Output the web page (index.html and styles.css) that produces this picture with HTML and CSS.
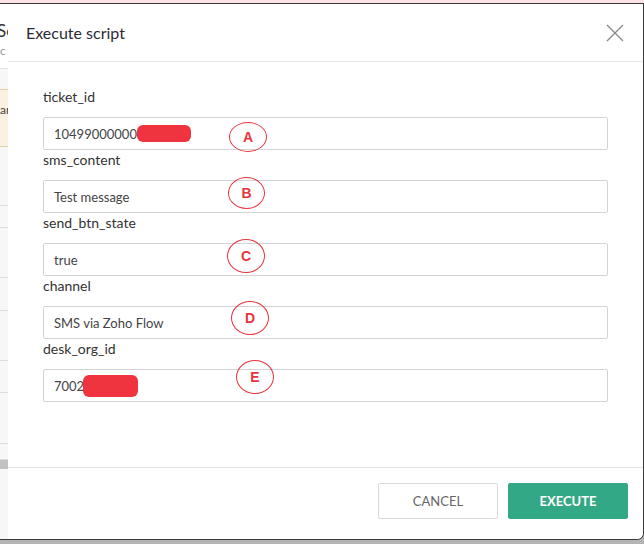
FILE: index.html
```html
<!DOCTYPE html>
<html>
<head>
<meta charset="utf-8">
<link rel="stylesheet" href="styles.css">
</head>
<body>
<div class="topbar"></div>
<div class="screen">
  <div class="app">
    <div class="app-head">
      <div class="app-title">Se</div>
      <div class="app-sub">c</div>
    </div>
    <div class="app-notice">ar</div>
    <div class="app-rows">
      <div class="row r1"></div>
      <div class="row r2"></div>
      <div class="row r3"></div>
      <div class="row r4"></div>
      <div class="row r5"></div>
      <div class="row r6"></div>
      <div class="row r7"></div>
      <div class="row r8"></div>
      <div class="row r9"></div>
    </div>
  </div>

  <div class="modal">
    <div class="modal-head">
      <div class="modal-title">Execute script</div>
      <svg class="close" width="18" height="18" viewBox="0 0 18 18">
        <path d="M1 1 L17 17 M17 1 L1 17" stroke="#8a8a8a" stroke-width="1.4" fill="none"/>
      </svg>
    </div>
    <div class="modal-body">
      <div class="field">
        <label class="label">ticket_id</label>
        <div class="input-wrap">
          <div class="input">10499000000<span class="redact redact-a"></span></div>
          <div class="ann ann-a">A</div>
        </div>
      </div>
      <div class="field">
        <label class="label">sms_content</label>
        <div class="input-wrap">
          <div class="input">Test message</div>
          <div class="ann ann-b">B</div>
        </div>
      </div>
      <div class="field">
        <label class="label">send_btn_state</label>
        <div class="input-wrap">
          <div class="input">true</div>
          <div class="ann ann-c">C</div>
        </div>
      </div>
      <div class="field">
        <label class="label">channel</label>
        <div class="input-wrap">
          <div class="input">SMS via Zoho Flow</div>
          <div class="ann ann-d">D</div>
        </div>
      </div>
      <div class="field">
        <label class="label">desk_org_id</label>
        <div class="input-wrap">
          <div class="input">7002<span class="redact redact-e"></span></div>
          <div class="ann ann-e">E</div>
        </div>
      </div>
    </div>
    <div class="modal-foot">
      <button class="btn btn-cancel">CANCEL</button>
      <button class="btn btn-exec">EXECUTE</button>
    </div>
  </div>
</div>
</body>
</html>
```

FILE: styles.css
```css
* {
  box-sizing: border-box;
}
html, body {
  margin: 0;
  padding: 0;
}
body {
  width: 644px;
  height: 544px;
  background: #b4b4b4;
  font-family: Lato, "Open Sans", sans-serif;
  position: relative;
  overflow: hidden;
}
.topbar {
  height: 3px;
  background: #fbe3e4;
}
.screen {
  position: relative;
  height: 537px;
  width: 644px;
  border-top: 1px solid #3a3a3a;
  border-right: 1px solid #3a3a3a;
  border-bottom: 1px solid #3a3a3a;
  border-bottom-right-radius: 7px;
  background: #f7f7f7;
  overflow: hidden;
}
.app {
  width: 8px;
  overflow: hidden;
}
.app-head {
  background: #fff;
  height: 65px;
  border-bottom: 1px solid #e3e3e3;
}
.app-title {
  font-size: 17px;
  color: #333;
  padding-top: 17px;
  line-height: 20px;
  white-space: nowrap;
  margin-left: -3px;
}
.app-sub {
  font-size: 12px;
  color: #999;
  line-height: 16px;
  margin-top: 2px;
}
.app-notice {
  margin-top: 20px;
  height: 58px;
  background: #faf1e1;
  border-top: 1px solid #e3cfa6;
  border-bottom: 1px solid #e3cfa6;
  font-size: 12px;
  color: #444;
  line-height: 40px;
  white-space: nowrap;
  margin-left: -3px;
  padding-left: 3px;
}
.app-rows {
  display: flex;
  flex-direction: column;
}
.row {
  border-bottom: 1px solid #dedede;
}
.r1 { height: 59px; }
.r2 { height: 22px; }
.r3 { height: 50px; }
.r4 { height: 33px; }
.r5 { height: 50px; }
.r6 { height: 32px; }
.r7 { height: 51px; }
.r8 { height: 16px; }
.r9 { height: 11px; background: #c2c2c2; border-bottom: 2px solid #f7f7f7; }

.modal {
  position: absolute;
  left: 8px;
  top: 0;
  right: 0;
  bottom: 0;
  background: #fff;
  display: flex;
  flex-direction: column;
}
.modal-head {
  height: 58px;
  border-bottom: 1px solid #e7e7e7;
  display: flex;
  align-items: center;
  justify-content: space-between;
  padding: 0 19px 0 18px;
  flex-shrink: 0;
}
.modal-title {
  font-size: 16px;
  color: #2b2b36;
  margin-top: -1px;
}
.modal-body {
  flex: 1;
  padding: 25px 35px 0 35px;
}
.field {
  display: flex;
  flex-direction: column;
}
.label {
  font-size: 14px;
  line-height: 20px;
  color: #333;
  margin-bottom: 10px;
}
.input-wrap {
  position: relative;
}
.input {
  height: 33px;
  border: 1px solid #d3d3d3;
  border-radius: 2px;
  padding: 0 10px;
  font-size: 13px;
  color: #444;
  display: flex;
  align-items: center;
}
.redact {
  display: inline-block;
  height: 17px;
  background: #f0343f;
  border-radius: 6px;
}
.redact-a { width: 54px; }
.redact-e { width: 55px; height: 22px; margin-left: -1px; margin-top: 1px; }
.ann {
  position: absolute;
  width: 38px;
  height: 30px;
  border: 1.5px solid #e8343e;
  border-radius: 50%;
  color: #e8343e;
  font-family: "Liberation Sans", Arial, sans-serif;
  font-weight: bold;
  font-size: 14px;
  display: flex;
  align-items: center;
  justify-content: center;
}
.ann-a { left: 186px; top: 5px; }
.ann-b { left: 185px; top: -3px; height: 32px; width: 37px; }
.ann-c { left: 184px; top: -4px; height: 34px; }
.ann-d { left: 188px; top: -5px; height: 34px; }
.ann-e { left: 193px; top: -9px; height: 34px; }

.modal-foot {
  height: 72px;
  border-top: 1px solid #e2e2e2;
  display: flex;
  justify-content: flex-end;
  align-items: flex-start;
  padding: 15px 15px 0 0;
  gap: 10px;
  flex-shrink: 0;
}
.btn {
  height: 36px;
  border-radius: 2px;
  font-family: Lato, "Open Sans", sans-serif;
  font-size: 13px;
  cursor: pointer;
}
.btn-cancel {
  width: 120px;
  background: #fff;
  border: 1px solid #d9d9d9;
  color: #666;
}
.btn-exec {
  width: 120px;
  background: #33a886;
  border: 1px solid #33a886;
  color: #fff;
  font-weight: bold;
}
```
